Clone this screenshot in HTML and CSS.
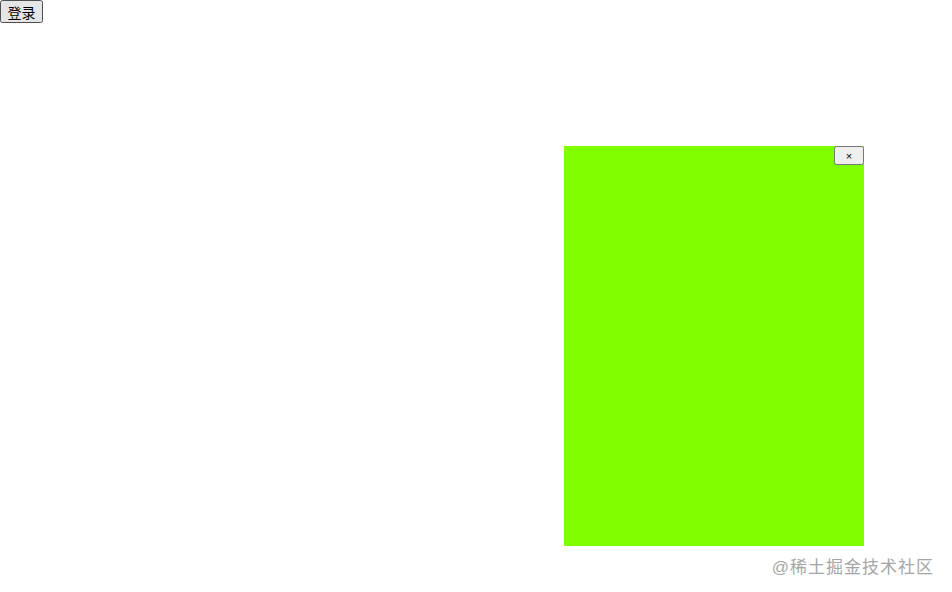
FILE: index.html
```html
<!DOCTYPE html>
<html lang="zh-CN">
<head>
    <meta charset="UTF-8">
    <title>登录</title>
    <link rel="stylesheet" href="styles.css">
</head>
<body>
    <button class="login-btn">登录</button>

    <div class="modal">
        <button class="close-btn">×</button>
    </div>

    <div class="watermark">@稀土掘金技术社区</div>
</body>
</html>
```
FILE: styles.css
```css
body {
    margin: 0;
    font-family: "Liberation Sans", "Noto Sans CJK SC", sans-serif;
}

.login-btn {
    font-family: "Liberation Sans", "Noto Sans CJK SC", sans-serif;
    font-size: 14px;
    width: 43px;
    height: 23px;
    padding: 0;
}

.modal {
    position: absolute;
    left: 564px;
    top: 146px;
    width: 300px;
    height: 400px;
    background: #80ff00;
}

.close-btn {
    position: absolute;
    top: 0;
    right: 0;
    width: 30px;
    height: 19px;
    padding: 0;
    font-size: 11px;
    font-family: "Liberation Sans", sans-serif;
}

.watermark {
    position: absolute;
    right: 18px;
    top: 553px;
    font-size: 17px;
    color: #a6a6a6;
    letter-spacing: 1px;
}
```
